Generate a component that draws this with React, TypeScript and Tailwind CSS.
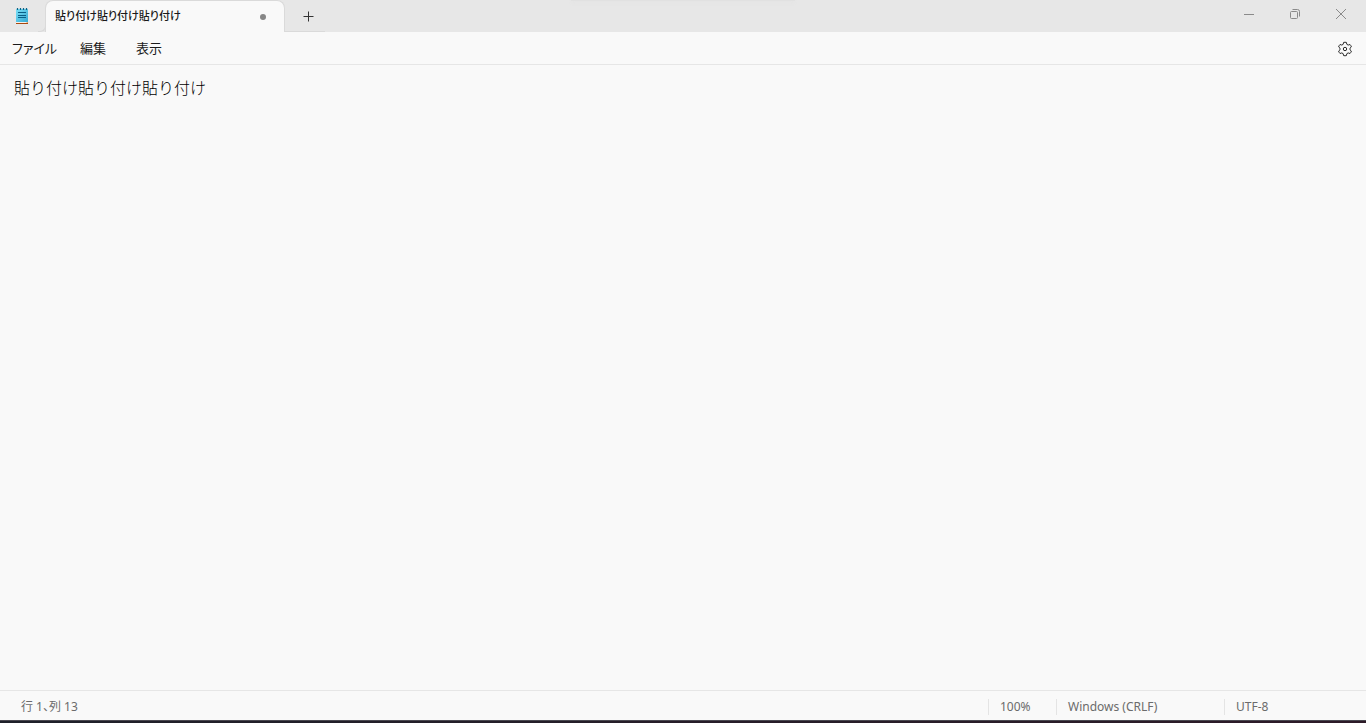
import { useState } from "react";

const menus = ["ファイル", "編集", "表示"];

function NotepadIcon() {
  return (
    <svg width="14" height="18" viewBox="0 0 14 18" aria-hidden="true">
      <defs>
        <linearGradient id="pad" x1="0" y1="0" x2="1" y2="1">
          <stop offset="0" stopColor="#7be0f7" />
          <stop offset="1" stopColor="#35a9d3" />
        </linearGradient>
      </defs>
      <rect x="1" y="14" width="12" height="2" fill="#f4efe9" />
      <rect x="1" y="16" width="12" height="1" fill="#a9480f" />
      <path d="M11 16l2-2v2z" fill="#d9a77c" />
      <rect x="1" y="2" width="12" height="13" rx="0.5" fill="url(#pad)" />
      <path d="M2.5 1v2M5.5 1v2M8.5 1v2M11.5 1v2" stroke="#0c6286" strokeWidth="1.2" />
      <path d="M3 5.5h8M3 8.5h8M3 10.5h8" stroke="#0a5f86" strokeWidth="1" />
    </svg>
  );
}

function GearIcon() {
  return (
    <svg width="16" height="16" viewBox="-8 -8 16 16" fill="none" stroke="#2b2b2b" strokeLinejoin="round" aria-hidden="true">
      <path d="M-1.8-4.7L-1.4-6.6Q0-6.9 1.4-6.6L1.8-4.7L3.17-3.91L5-4.5Q6-3.4 6.4-2.1L4.97-.79V.79L6.4 2.1Q6 3.4 5 4.5L3.17 3.91L1.8 4.7L1.4 6.6Q0 6.9-1.4 6.6L-1.8 4.7L-3.17 3.91L-5 4.5Q-6 3.4-6.4 2.1L-4.97.79V-.79L-6.4-2.1Q-6-3.4-5-4.5L-3.17-3.91Z" />
      <circle r="1.7" />
    </svg>
  );
}

function TitleBar() {
  return (
    <header className="relative flex h-8 shrink-0 items-stretch bg-[#e7e7e7]">
      <div className="absolute top-0 left-1/2 h-px w-56 -translate-x-1/2 bg-[#e1e1e1] shadow-[0_1px_4px_#dddddd]" />
      <div className="flex w-[38px] items-center pl-[15px]">
        <NotepadIcon />
      </div>
      <div className="flex w-2 items-end">
        <div className="h-2 w-2 rounded-br-md border-r border-b border-[#dadada] bg-[#e7e7e7]" />
      </div>
      <div className="-ml-px flex w-60 items-center justify-between rounded-t-lg border-x border-t border-[#dadada] bg-[#f9f9f9] pr-[18px] pl-[9px]">
        <span className="text-[11px] font-medium text-[#1a1a1a]">貼り付け貼り付け貼り付け</span>
        <span className="size-1.5 rounded-full bg-[#868686]" />
      </div>
      <button type="button" aria-label="新しいタブ" className="flex w-10 items-center justify-center border-b border-[#dadada] pt-0.5 pl-2">
        <svg width="12" height="12" viewBox="0 0 12 12" fill="none" stroke="#333333" aria-hidden="true">
          <path d="M5.5 0.5v10M0.5 5.5h10" />
        </svg>
      </button>
      <div className="ml-auto flex pr-0.5 pb-1">
        <button type="button" aria-label="最小化" className="flex w-[46px] items-center justify-center">
          <svg width="10" height="10" viewBox="0 0 10 10" fill="none" stroke="#8a8a8a" aria-hidden="true">
            <path d="M0 5.5h10" />
          </svg>
        </button>
        <button type="button" aria-label="元に戻す" className="flex w-[46px] items-center justify-center">
          <svg width="10" height="10" viewBox="0 0 10 10" fill="none" stroke="#8a8a8a" aria-hidden="true">
            <rect x="0.5" y="2.5" width="7" height="7" rx="1" />
            <path d="M2.5 0.5h5a2 2 0 0 1 2 2v5" />
          </svg>
        </button>
        <button type="button" aria-label="閉じる" className="flex w-[46px] items-center justify-center">
          <svg width="10" height="10" viewBox="0 0 10 10" fill="none" stroke="#8a8a8a" aria-hidden="true">
            <path d="M0 0l10 10M10 0L0 10" />
          </svg>
        </button>
      </div>
    </header>
  );
}

export default function App() {
  const [text, setText] = useState("貼り付け貼り付け貼り付け");
  return (
    <div className="flex h-screen flex-col bg-[#f9f9f9] font-['Noto_Sans','Noto_Sans_CJK_JP',sans-serif] [font-feature-settings:'palt']">
      <TitleBar />
      <nav className="flex h-[33px] shrink-0 items-center justify-between border-b border-[#e6e6e6] pt-px pr-[13px] pl-3">
        <div className="flex gap-3">
          {menus.map((name) => (
            <button key={name} type="button" className="min-w-11 text-left text-[13px] text-[#1a1a1a] first:min-w-14">
              {name}
            </button>
          ))}
        </div>
        <button type="button" aria-label="設定">
          <GearIcon />
        </button>
      </nav>
      <textarea
        aria-label="テキスト エディター"
        spellCheck={false}
        value={text}
        onChange={(event) => setText(event.target.value)}
        className="w-full flex-1 resize-none bg-transparent px-3.5 pt-2.5 font-['Noto_Sans_CJK_JP',sans-serif] text-base font-light text-black outline-none [font-feature-settings:normal]"
      />
      <footer className="flex h-[30px] shrink-0 items-center border-t border-[#e6e6e6] pt-0.5 text-xs text-[#6b6b6b]">
        <div className="flex-1 pl-[21px]">行 1、列 13</div>
        <div className="w-[68px] border-l border-[#e4e4e4] pl-[11px]">100%</div>
        <div className="w-[168px] border-l border-[#e4e4e4] pl-[11px]">Windows (CRLF)</div>
        <div className="w-[142px] border-l border-[#e4e4e4] pl-[11px]">UTF-8</div>
      </footer>
      <div className="h-[3px] shrink-0 border-t border-[#4a4850] bg-gradient-to-r from-[#1e2029] to-[#2c1a27]" />
    </div>
  );
}
